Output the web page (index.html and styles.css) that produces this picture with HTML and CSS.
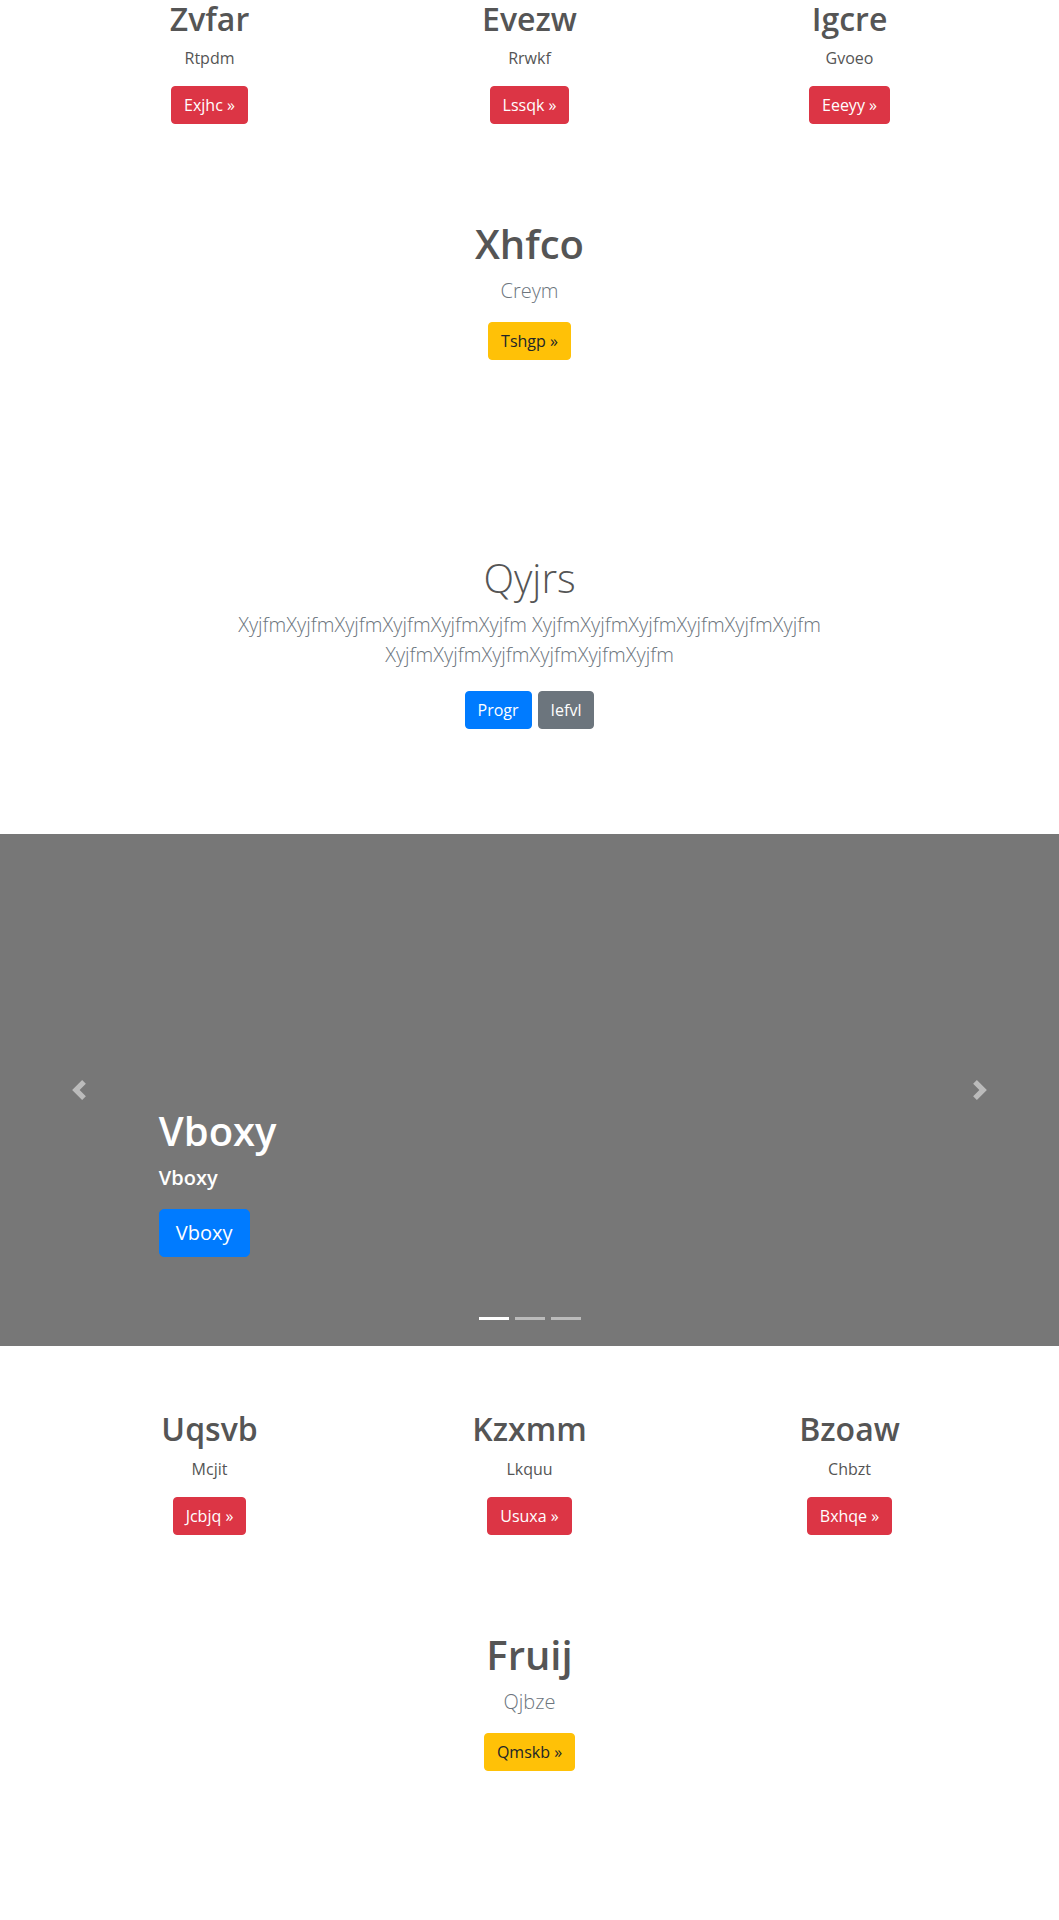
FILE: index.html
```html
<!DOCTYPE html>
<html lang="en">
<head>
<meta charset="utf-8">
<title>Page</title>
<link rel="stylesheet" href="styles.css">
</head>
<body>
<div class="marketing">
  <div class="feature">
    <h2 class="feature-title">Zvfar</h2>
    <p class="feature-text">Rtpdm</p>
    <div class="actions"><a class="btn btn-danger" href="#">Exjhc &raquo;</a></div>
  </div>
  <div class="feature">
    <h2 class="feature-title">Evezw</h2>
    <p class="feature-text">Rrwkf</p>
    <div class="actions"><a class="btn btn-danger" href="#">Lssqk &raquo;</a></div>
  </div>
  <div class="feature">
    <h2 class="feature-title">Igcre</h2>
    <p class="feature-text">Gvoeo</p>
    <div class="actions"><a class="btn btn-danger" href="#">Eeeyy &raquo;</a></div>
  </div>
</div>

<section class="callout">
  <h1 class="callout-title">Xhfco</h1>
  <p class="lead">Creym</p>
  <div class="actions"><a class="btn btn-warning" href="#">Tshgp &raquo;</a></div>
</section>

<section class="intro">
  <h1 class="intro-title">Qyjrs</h1>
  <p class="lead intro-lead">XyjfmXyjfmXyjfmXyjfmXyjfmXyjfm XyjfmXyjfmXyjfmXyjfmXyjfmXyjfm XyjfmXyjfmXyjfmXyjfmXyjfmXyjfm</p>
  <div class="actions intro-actions">
    <a class="btn btn-primary" href="#">Progr</a>
    <a class="btn btn-secondary" href="#">Iefvl</a>
  </div>
</section>

<div class="carousel">
  <div class="carousel-caption">
    <h1 class="caption-title">Vboxy</h1>
    <p class="caption-text">Vboxy</p>
    <div class="caption-actions"><a class="btn btn-primary btn-lg" href="#">Vboxy</a></div>
  </div>
  <a class="carousel-control control-prev" href="#" aria-label="Previous">
    <svg width="20" height="20" viewBox="0 0 8 8" fill="#fff"><path d="M5.25 0l-4 4 4 4 1.5-1.5L4.25 4l2.5-2.5L5.25 0z"/></svg>
  </a>
  <a class="carousel-control control-next" href="#" aria-label="Next">
    <svg width="20" height="20" viewBox="0 0 8 8" fill="#fff"><path d="M2.75 0l-1.5 1.5L3.75 4l-2.5 2.5L2.75 8l4-4-4-4z"/></svg>
  </a>
  <ol class="indicators">
    <li class="active"></li>
    <li></li>
    <li></li>
  </ol>
</div>

<div class="marketing">
  <div class="feature">
    <h2 class="feature-title">Uqsvb</h2>
    <p class="feature-text">Mcjit</p>
    <div class="actions"><a class="btn btn-danger" href="#">Jcbjq &raquo;</a></div>
  </div>
  <div class="feature">
    <h2 class="feature-title">Kzxmm</h2>
    <p class="feature-text">Lkquu</p>
    <div class="actions"><a class="btn btn-danger" href="#">Usuxa &raquo;</a></div>
  </div>
  <div class="feature">
    <h2 class="feature-title">Bzoaw</h2>
    <p class="feature-text">Chbzt</p>
    <div class="actions"><a class="btn btn-danger" href="#">Bxhqe &raquo;</a></div>
  </div>
</div>

<section class="callout">
  <h1 class="callout-title">Fruij</h1>
  <p class="lead">Qjbze</p>
  <div class="actions"><a class="btn btn-warning" href="#">Qmskb &raquo;</a></div>
</section>
</body>
</html>
```

FILE: styles.css
```css
* { box-sizing: border-box; }

body {
  margin: 0;
  font-family: "Open Sans", "Noto Sans", "DejaVu Sans", sans-serif;
  font-size: 16px;
  line-height: 1.5;
  color: #555;
  background: #fff;
}

h1, h2, p { margin: 0; }

.marketing {
  width: 960px;
  margin: 0 auto;
  display: grid;
  grid-template-columns: repeat(3, 1fr);
}

.feature {
  padding: 0 15px;
  margin-bottom: 24px;
  text-align: center;
}

.feature-title {
  font-size: 32px;
  font-weight: 600;
  line-height: 1.2;
  margin-bottom: 8px;
}

.feature-text { margin-bottom: 16px; }

.actions {
  display: flex;
  justify-content: center;
}

.btn {
  display: inline-block;
  font-size: 16px;
  font-weight: 400;
  line-height: 24px;
  padding: 6px 12px;
  border: 1px solid transparent;
  border-radius: 4px;
  text-decoration: none;
  color: #fff;
  white-space: nowrap;
}

.btn-danger { background: #dc3545; border-color: #dc3545; }
.btn-warning { background: #ffc107; border-color: #ffc107; color: #212529; }
.btn-primary { background: #007bff; border-color: #007bff; }
.btn-secondary { background: #6c757d; border-color: #6c757d; }

.btn-lg {
  font-size: 20px;
  line-height: 30px;
  padding: 8px 16px;
  border-radius: 5px;
}

.callout {
  text-align: center;
  margin-top: 72px;
}

.callout-title {
  font-size: 40px;
  font-weight: 600;
  line-height: 1.2;
  margin-bottom: 8px;
}

.lead {
  font-size: 20px;
  font-weight: 300;
  line-height: 1.5;
  color: #6c757d;
  margin-bottom: 16px;
}

.intro {
  text-align: center;
  margin-top: 194px;
}

.intro-title {
  font-size: 40px;
  font-weight: 300;
  line-height: 1.2;
  margin-bottom: 8px;
}

.intro-lead {
  max-width: 700px;
  margin-left: auto;
  margin-right: auto;
}

.intro-actions {
  gap: 6px;
  padding-top: 5px;
}

.carousel {
  position: relative;
  height: 512px;
  margin-top: 105px;
  margin-bottom: 64px;
  background: #777;
  display: flex;
  flex-direction: column;
  justify-content: flex-end;
  padding: 0 15% 89px;
}

.carousel-caption {
  color: #fff;
  text-align: left;
}

.caption-title {
  font-size: 40px;
  font-weight: 600;
  line-height: 1.2;
  margin-bottom: 8px;
}

.caption-text {
  font-size: 20px;
  font-weight: 600;
  line-height: 30px;
  margin-bottom: 16px;
}

.caption-actions { display: flex; }

.carousel-control {
  position: absolute;
  top: 0;
  bottom: 0;
  width: 15%;
  display: flex;
  align-items: center;
  justify-content: center;
  opacity: 0.5;
}

.control-prev { left: 0; }
.control-next { right: 0; }

.indicators {
  position: absolute;
  left: 0;
  right: 0;
  bottom: 26px;
  margin: 0;
  padding: 0;
  list-style: none;
  display: flex;
  justify-content: center;
  gap: 6px;
}

.indicators li {
  width: 30px;
  height: 3px;
  background: #fff;
  opacity: 0.5;
}

.indicators li.active { opacity: 1; }
```
